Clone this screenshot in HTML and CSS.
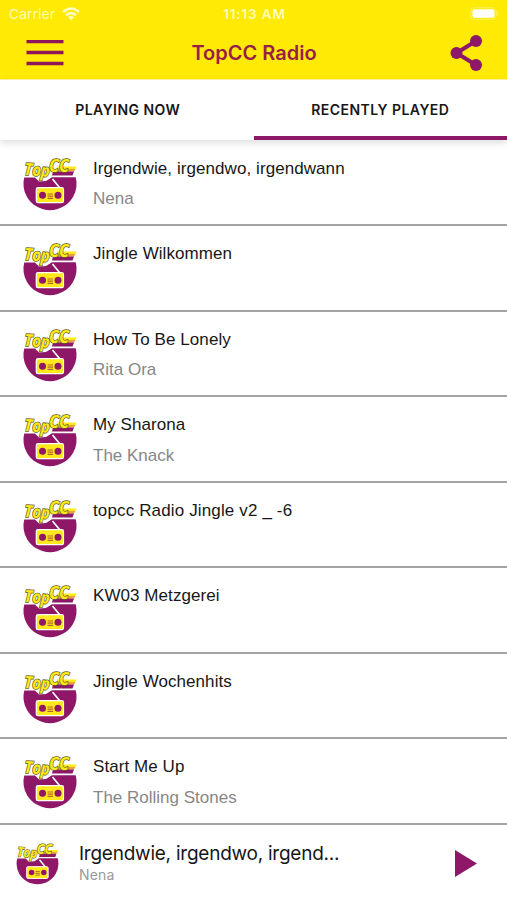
FILE: index.html
```html
<!DOCTYPE html>
<html lang="en">
<head>
<meta charset="utf-8">
<title>TopCC Radio</title>
<link rel="stylesheet" href="styles.css">
</head>
<body>
<header class="header">
  <div class="status">
    <div class="carrier"><span>Carrier</span>
      <svg class="wifi" viewBox="0 0 18 14"><path fill="none" stroke="#fffcc0" stroke-width="2.500" d="M1 5Q9-2 17 5M4 8.200Q9 4 14 8.200"/><path fill="#fffcc0" d="M6 10.200Q9 8 12 10.200L9 13.500Z"/></svg>
    </div>
    <time class="clock">11:13 AM</time>
    <svg class="battery" viewBox="0 0 30 13"><rect x=".7" y=".7" width="25.500" height="11.600" rx="3.500" fill="none" stroke="#fff25c"/><rect x="2.500" y="2.200" width="22" height="8.600" rx="2" fill="#fff"/><path d="M27.600 4.500v4" stroke="#fff25c"/></svg>
  </div>
  <div class="titlebar">
    <svg class="menu" viewBox="0 0 38 26"><path stroke="#8f1758" stroke-width="3.700" d="M.5 1.500H37.500M.5 12.500H37.500M.5 23.500H37.500"/></svg>
    <h1>TopCC Radio</h1>
    <svg class="share" viewBox="0 0 32 36"><path d="M25.500 6 6 18 25.500 30" fill="none" stroke="#8f1768" stroke-width="4"/><g fill="#8f1768"><circle cx="25.500" cy="6" r="6"/><circle cx="6" cy="18" r="6"/><circle cx="25.500" cy="30" r="6"/></g></svg>
  </div>
</header>
<nav class="tabs"><a class="tab now">PLAYING NOW</a><a class="tab active">RECENTLY PLAYED</a></nav>
<main class="list">
  <article class="row">
    <svg class="logo" viewBox="0 0 54 52">
      <g id="logo">
        <path fill="#8f1768" d="M1.500 17H52.500Q55.500 29 50 38A26.700 26.700 0 0 1 4 38Q-1.500 29 1.500 17Z"/>
        <path fill="#fff" d="M0 14H33L54 16.500V18.200H29L23 22 16 22.500 12 18.500H0Z"/>
        <path fill="#ffe91a" d="M34 7.500H53.500L52.500 10H34Z"/>
        <path fill="#eda033" d="M34 10H52.500L51 12.500H34Z"/>
        <path fill="#8f1768" d="M30 12.500H51L49.500 16.500H29Z"/>
        <g class="wordmark">
          <text x="1" y="16" font-size="17" textLength="25.500" lengthAdjust="spacingAndGlyphs" transform="rotate(4 1 16)">Top</text>
          <text x="26" y="13" font-size="17.500" textLength="20" lengthAdjust="spacingAndGlyphs">CC</text>
        </g>
        <path d="M29.500 20 36.500 28.500" fill="none" stroke="#fff" stroke-width="1.700"/>
        <rect x="13.300" y="28.700" width="27.200" height="15" rx="1.800" fill="#ffe91a" stroke="#fff" stroke-width="1.200"/>
        <circle cx="19.500" cy="36.200" r="3.500" fill="#8f1768"/>
        <circle cx="35" cy="36.200" r="3.500" fill="#8f1768"/>
        <path d="M24.500 35H30M24.500 37.200H30M24.500 39.400H30" stroke="#b5652f" stroke-width="1.200"/>
      </g>
    </svg>
    <div><h2>Irgendwie, irgendwo, irgendwann</h2><p>Nena</p></div>
  </article>
  <article class="row"><svg class="logo" viewBox="0 0 54 52"><use href="#logo"/></svg><div><h2>Jingle Wilkommen</h2></div></article>
  <article class="row"><svg class="logo" viewBox="0 0 54 52"><use href="#logo"/></svg><div><h2>How To Be Lonely</h2><p>Rita Ora</p></div></article>
  <article class="row"><svg class="logo" viewBox="0 0 54 52"><use href="#logo"/></svg><div><h2>My Sharona</h2><p>The Knack</p></div></article>
  <article class="row"><svg class="logo" viewBox="0 0 54 52"><use href="#logo"/></svg><div><h2 class="wide">topcc Radio Jingle v2 _ -6</h2></div></article>
  <article class="row"><svg class="logo" viewBox="0 0 54 52"><use href="#logo"/></svg><div><h2>KW03 Metzgerei</h2></div></article>
  <article class="row"><svg class="logo" viewBox="0 0 54 52"><use href="#logo"/></svg><div><h2>Jingle Wochenhits</h2></div></article>
  <article class="row"><svg class="logo" viewBox="0 0 54 52"><use href="#logo"/></svg><div><h2>Start Me Up</h2><p>The Rolling Stones</p></div></article>
</main>
<footer class="player">
  <svg class="logo small" viewBox="0 0 54 52"><use href="#logo"/></svg>
  <div class="track"><strong>Irgendwie, irgendwo, irgend...</strong><span>Nena</span></div>
  <svg class="play" viewBox="0 0 22 27"><path fill="#8f1768" d="M0 0 22 13.500 0 27Z"/></svg>
</footer>
</body>
</html>
```
FILE: styles.css
```css
* { box-sizing: border-box; }
body { margin: 0; width: 507px; height: 900px; overflow: hidden; background: #fff; color: #171717; font-family: "Liberation Sans", sans-serif; }
svg { display: block; flex: none; }
h1, h2, p { margin: 0; font-weight: 400; }
.header { height: 80px; background: #ffea05; border-bottom: 1px solid #fff2a0; font-family: Inter, sans-serif; }
.status { height: 27px; display: grid; grid-template-columns: 1fr auto 1fr; align-items: center; padding: 0 7px 0 9px; color: #fffbb8; }
.carrier { display: flex; align-items: center; gap: 7px; font-size: 13.500px; letter-spacing: .3px; }
.wifi { width: 18px; height: 14px; }
.clock { font-size: 13.500px; font-weight: 600; letter-spacing: .85px; }
.battery { width: 30px; height: 13px; justify-self: end; }
.titlebar { height: 52px; display: flex; align-items: center; justify-content: space-between; padding: 0 24px 1px 26px; }
.menu { width: 38px; height: 26px; }
.share { width: 33px; height: 36px; }
h1 { margin-right: 6px; font-size: 20px; font-weight: 600; line-height: 24px; color: #982048; }
.tabs { height: 60px; display: flex; position: relative; z-index: 1; background: #fff; box-shadow: 0 3px 7px rgba(0,0,0,.13); }
.tab { width: 50%; display: flex; align-items: center; justify-content: center; border-bottom: 4px solid transparent; padding-top: 3px; font: 600 14px Inter, sans-serif; letter-spacing: .45px; }
.now { padding-left: 2px; }
.active { border-color: #8f1768; }
.list { padding-top: .5px; }
.row { height: 85.500px; display: flex; padding: 18px 0 0 23px; gap: 16px; border-bottom: 2px solid #a3a3a3; }
.logo { width: 54px; height: 52px; overflow: visible; }
.wordmark { fill: #ffe91a; stroke: #66601f; stroke-width: 1.500px; paint-order: stroke; font-family: "Open Sans", sans-serif; font-style: italic; font-weight: 700; }
h2 { font-size: 17px; line-height: 20px; letter-spacing: .07px; }
.wide { letter-spacing: .14px; }
.row p { margin-top: 10.500px; font-size: 17px; line-height: 20px; color: #878787; }
.player { height: 75.500px; display: flex; align-items: flex-start; padding: 19.500px 30px 0 16px; font-family: Inter, sans-serif; }
.small { width: 43px; height: 41px; }
.track { flex: 1; padding-left: 20px; margin-top: -3px; }
.track strong { display: block; font-size: 19px; line-height: 25px; font-weight: 400; letter-spacing: -.24px; }
.track span { display: block; font-size: 14px; line-height: 18px; color: #999; letter-spacing: .2px; }
.play { width: 22px; height: 27px; margin-top: 6px; }
```
